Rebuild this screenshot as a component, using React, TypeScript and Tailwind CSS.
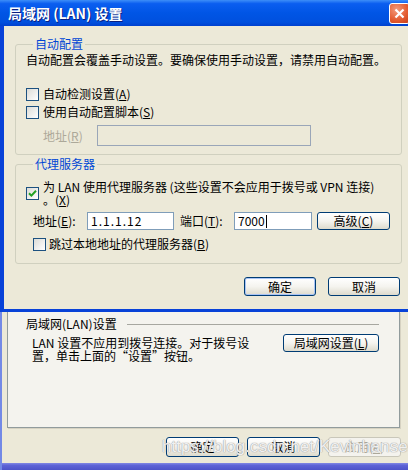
import React from "react";

const Check = ({ checked }: { checked?: boolean }) => (
  <span className="flex h-[13px] w-[13px] shrink-0 items-center justify-center border border-[#1c5180] bg-linear-to-br from-[#dcdcd7] to-white">
    {checked && (
      <svg width="9" height="9" viewBox="0 0 9 9">
        <path d="M1 4.2 L3.4 6.6 L8 1.8" fill="none" stroke="#21a121" strokeWidth="2" />
      </svg>
    )}
  </span>
);

const XpButton = ({
  children,
  className = "",
  disabled = false,
}: {
  children: React.ReactNode;
  className?: string;
  disabled?: boolean;
}) => (
  <button
    className={`flex shrink-0 items-center justify-center rounded-[3px] border text-[12px] leading-[14px] ${
      disabled
        ? "border-[#c9c7ba] bg-[#f4f3ee] text-[#aca899]"
        : "border-[#003c74] bg-linear-to-b from-white via-[#f5f4ef] to-[#dedbcd] text-black"
    } ${className}`}
  >
    {children}
  </button>
);

const Key = ({ k }: { k: string }) => (
  <>
    (<u>{k}</u>)
  </>
);

export default function App() {
  return (
    <div className="relative flex h-[470px] w-[408px] flex-col overflow-hidden bg-[#ece9d8] font-['Noto_Sans_CJK_SC',sans-serif] text-[12px] leading-[14px] text-black">
      {/* dialog */}
      <div className="flex h-[312px] shrink-0 flex-col">
        <div className="flex h-[26px] shrink-0 items-center justify-between bg-[linear-gradient(to_bottom,#3d8ef8_0%,#0b5ef0_14%,#0055e5_50%,#0050de_85%,#0041cf_100%)] pl-[8px]">
          <span className="text-[14px] font-bold leading-[16px] text-white [text-shadow:1px_1px_0_#0a1f80]">
            局域网 (LAN) 设置
          </span>
          <span className="mr-[-2px] flex h-[21px] w-[21px] items-center justify-center rounded-[3px] border border-white bg-[radial-gradient(circle_at_35%_30%,#f39a7c,#e35a2e_60%,#c4401b)]">
            <svg width="11" height="11" viewBox="0 0 11 11">
              <path d="M1.5 1.5 L9.5 9.5 M9.5 1.5 L1.5 9.5" stroke="white" strokeWidth="2.2" />
            </svg>
          </span>
        </div>
        <div className="flex flex-1 flex-col border-b-[3px] border-l-[4px] border-[#0842d8] pl-[11px] pr-[6px] pt-[11px]">
          <fieldset className="rounded-[3px] border border-[#d0d0bf] pb-[8px] pl-[10px]">
            <legend className="ml-[7px] px-[2px] text-[#0046d5]">自动配置</legend>
            <div className="mt-[2px]">自动配置会覆盖手动设置。要确保使用手动设置，请禁用自动配置。</div>
            <div className="mt-[20px] flex items-center gap-[4px]">
              <Check />
              <span>
                自动检测设置<Key k="A" />
              </span>
            </div>
            <div className="mt-[4px] flex items-center gap-[4px]">
              <Check />
              <span>
                使用自动配置脚本<Key k="S" />
              </span>
            </div>
            <div className="mt-[6px] flex items-center pl-[17px]">
              <span className="w-[54px] text-[#aca899]">
                地址<Key k="R" />
              </span>
              <span className="h-[21px] w-[214px] border border-[#9aa6b8] bg-[#ece9d8]" />
            </div>
          </fieldset>

          <fieldset className="mt-[2px] rounded-[3px] border border-[#d0d0bf] pb-[12px] pl-[10px]">
            <legend className="ml-[7px] px-[2px] text-[#0046d5]">代理服务器</legend>
            <div className="mt-[9px] flex items-center gap-[4px] leading-[13px]">
              <Check checked />
              <span>
                为 LAN 使用代理服务器 (这些设置不会应用于拨号或 VPN 连接)
                <br />。<Key k="X" />
              </span>
            </div>
            <div className="mt-[6px] flex items-center pl-[7px]">
              <span className="w-[54px]">
                地址<Key k="E" />:
              </span>
              <span className="flex h-[18px] w-[87px] items-center border border-[#7f9db9] bg-white pl-[3px] tracking-[1px]">
                1.1.1.12
              </span>
              <span className="ml-[6px] w-[54px]">
                端口<Key k="T" />:
              </span>
              <span className="flex h-[18px] w-[78px] items-center border border-[#7f9db9] bg-white pl-[3px]">
                7000<span className="ml-[1px] h-[13px] w-px bg-black" />
              </span>
              <XpButton className="ml-[5px] h-[18px] w-[73px]">
                高级<Key k="C" />
              </XpButton>
            </div>
            <div className="mt-[7px] flex items-center gap-[3px] pl-[7px]">
              <Check />
              <span>
                跳过本地地址的代理服务器<Key k="B" />
              </span>
            </div>
          </fieldset>

          <div className="mr-[2px] mt-[13px] flex justify-end gap-[12px]">
            <XpButton className="h-[19px] w-[72px] shadow-[inset_0_0_0_1px_#a9c4f5]">确定</XpButton>
            <XpButton className="h-[19px] w-[72px]">取消</XpButton>
          </div>
        </div>
      </div>

      {/* window behind */}
      <div className="flex flex-1 flex-col border-l-[2px] border-[#7389e6]">
        <div className="ml-[5px] mr-[8px] h-[116px] border-x border-b border-[#919b9c] bg-[#f4f3ee] pl-[18px] pr-[20px] pt-[5px] shadow-[1px_1px_0_#d6d2c2]">
          <div className="flex items-center gap-[10px]">
            <span>局域网(LAN)设置</span>
            <span className="h-px flex-1 bg-[#a7a7a0]" />
          </div>
          <div className="mt-[3px] flex items-start justify-between">
            <span className="ml-[6px] mt-[2px] leading-[13px]">
              LAN 设置不应用到拨号连接。对于拨号设
              <br />
              置，单击上面的“设置”按钮。
            </span>
            <XpButton className="h-[18px] w-[96px]">
              局域网设置<Key k="L" />
            </XpButton>
          </div>
        </div>
        <div className="mr-[7px] mt-[9px] flex justify-end gap-[8px]">
          <XpButton className="h-[20px] w-[73px]">确定</XpButton>
          <XpButton className="h-[20px] w-[73px]">取消</XpButton>
          <XpButton disabled className="h-[20px] w-[73px]">
            应用<Key k="A" />
          </XpButton>
        </div>
        <div className="flex-1" />
        <div className="h-[7px] bg-[linear-gradient(to_bottom,#8189e4,#5d63d6_35%,#4d53c9)]" />
      </div>

      <span className="pointer-events-none absolute left-[162px] top-[437px] font-['Liberation_Sans',sans-serif] text-[17px] leading-[20px] text-white/85 [text-shadow:0_0_1px_#9a9a9a,0_0_1px_#9a9a9a]">
        https://blog.csdn.net/Kevinhanser
      </span>
    </div>
  );
}
